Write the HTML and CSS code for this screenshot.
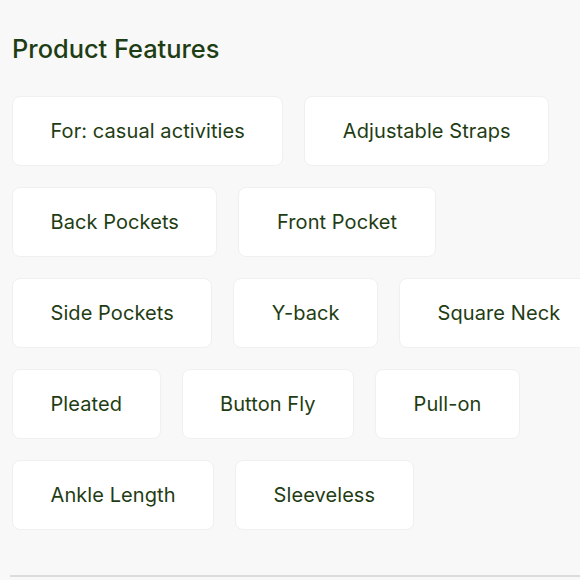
FILE: index.html
```html
<!DOCTYPE html>
<html>
<head>
<meta charset="utf-8">
<link rel="stylesheet" href="styles.css">
</head>
<body>
<section class="features">
  <h2 class="title">Product Features</h2>
  <ul class="chips">
    <li class="chip">For: casual activities</li>
    <li class="chip">Adjustable Straps</li>
    <li class="chip">Back Pockets</li>
    <li class="chip">Front Pocket</li>
    <li class="chip">Side Pockets</li>
    <li class="chip">Y-back</li>
    <li class="chip">Square Neck</li>
    <li class="chip">Pleated</li>
    <li class="chip">Button Fly</li>
    <li class="chip">Pull-on</li>
    <li class="chip">Ankle Length</li>
    <li class="chip">Sleeveless</li>
  </ul>
  <div class="divider"></div>
</section>
</body>
</html>
```

FILE: styles.css
```css
html, body {
  margin: 0;
  padding: 0;
  overflow: hidden;
  background: #f8f8f8;
}
body {
  font-family: "Inter", "Liberation Sans", sans-serif;
  color: #1f3d14;
}
.features {
  width: 600px;
  padding: 0 0 0 12px;
}
.title {
  margin: 0;
  padding-top: 33px;
  font-size: 25.4px;
  font-weight: 500;
  line-height: 32px;
}
.chips {
  list-style: none;
  margin: 31px 0 0 0;
  padding: 0;
  display: flex;
  flex-wrap: wrap;
  gap: 21px;
}
.chip {
  background: #ffffff;
  border: 1px solid #f0f0f0;
  border-radius: 8px;
  height: 68px;
  padding: 0 37.5px;
  display: flex;
  align-items: center;
  font-size: 20px;
  letter-spacing: 0.08px;
  line-height: 24px;
}
.divider {
  margin-top: 45px;
  margin-left: -2px;
  height: 2px;
  background: #dcdcdc;
}
```
